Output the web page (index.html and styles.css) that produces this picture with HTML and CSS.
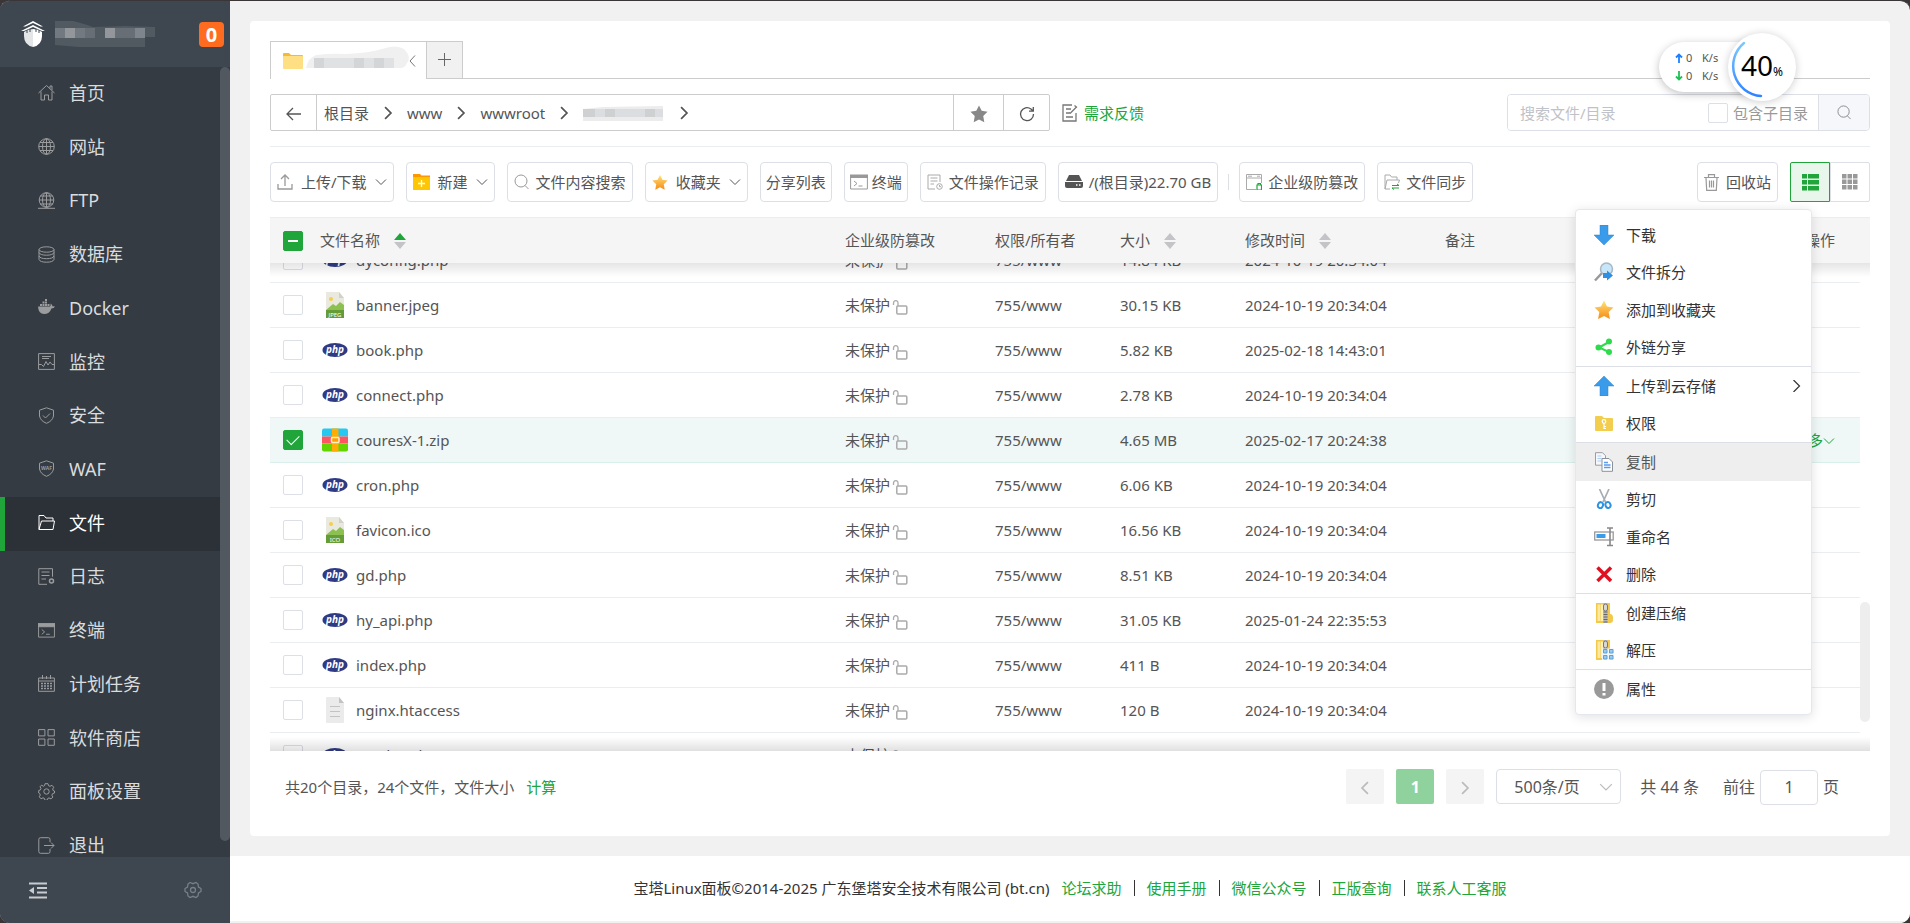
FILE: index.html
```html
<!DOCTYPE html>
<html lang="zh-CN">
<head>
    <meta charset="UTF-8">
    <meta name="viewport" content="width=device-width, initial-scale=1.0">
    <title>宝塔Linux面板</title>
    <link rel="stylesheet" href="styles.css">
</head>
<body>
    <!-- shared icons -->
    <svg class="sprite" aria-hidden="true">
        <symbol id="i-php" viewBox="0 0 26 16">
            <ellipse cx="13" cy="8" rx="12.500" ry="7" fill="#2f3a85"/>
            <text x="13" y="10.500" font-family="Open Sans, sans-serif" font-size="10" font-weight="700" font-style="italic" fill="#fff" text-anchor="middle">php</text>
        </symbol>
        <symbol id="i-pic" viewBox="0 0 20 26">
            <path d="M1 0h13l5 6v20H1z" fill="#e9e9df"/>
            <path d="M14 0v6h5z" fill="#d2d3c6"/>
            <circle cx="6" cy="7" r="2" fill="#f6ce4b"/>
            <path d="M1 18l7-6 3 2 4-4 4 3v6H1z" fill="#8cc152"/>
            <path d="M1 18h18v8H1z" fill="#659c35"/>
        </symbol>
        <symbol id="i-txt" viewBox="0 0 20 26">
            <path d="M1 1q0-1 1-1h12l5 6v19q0 1-1 1H2q-1 0-1-1z" fill="#ebebeb"/>
            <path d="M14 0v6h5z" fill="#c3c3c3"/>
            <path d="M5 9.500h10M5 14.500h10M5 19.500h10" stroke="#c3c3c3"/>
        </symbol>
        <symbol id="i-zip" viewBox="0 0 26 23">
            <path d="M0 2q0-2 2-2h22q2 0 2 2v6H0z" fill="#25c8f0"/>
            <path d="M0 8h26v7H0z" fill="#ff5562"/>
            <path d="M0 15h26v6q0 2-2 2H2q-2 0-2-2z" fill="#63d400"/>
            <path d="M10 0h6.500v23H10z" fill="#ffad05"/>
            <rect x="9.500" y="9" width="7.500" height="5" rx="1" fill="#ffa000" stroke="#fff3c4" stroke-width="1.500"/>
        </symbol>
        <symbol id="i-lock" viewBox="0 0 16 16">
            <path d="M1.500 6V4.200Q1.500 1.700 3.800 1.700T6 4.200V7" fill="none" stroke="#aaa" stroke-width="1.300"/>
            <rect x="4.800" y="7" width="10" height="8" rx="1" fill="none" stroke="#aaa" stroke-width="1.500"/>
        </symbol>
        <symbol id="i-down" viewBox="0 0 12 12"><path d="M1 3.500l5 5 5-5" fill="none" stroke="currentColor"/></symbol>
        <symbol id="i-right" viewBox="0 0 12 12"><path d="M3.500 1l5 5-5 5" fill="none" stroke="currentColor" stroke-width="1.500"/></symbol>
        <symbol id="i-sort" viewBox="0 0 12 18">
            <path class="up" d="M6 1l6 7H0z"/><path d="M6 17l6-7H0z" fill="#c4c4c8"/>
        </symbol>
        <symbol id="i-star" viewBox="0 0 20 20">
            <linearGradient id="gold" x2="0" y2="1"><stop offset="0" stop-color="#ffe27c"/><stop offset="1" stop-color="#f78b12"/></linearGradient>
            <path d="M10 .5l3 6 6.500 1-4.800 4.600 1.200 7L10 16l-5.900 3.100 1.200-7L.5 7.500l6.500-1z" fill="url(#gold)"/>
        </symbol>
        <symbol id="i-term" viewBox="0 0 18 16">
            <path d="M0 .5h18V4H0z" fill="currentColor"/>
            <path d="M.6 1v14h16.800V1M4 7l3 2.500L4 12M8.500 12h4" fill="none" stroke="currentColor"/>
        </symbol>
        <symbol id="i-search" viewBox="0 0 16 16"><circle cx="7" cy="7" r="6" fill="none" stroke="currentColor"/><path d="M11 11.500l3.500 3.500" stroke="currentColor"/></symbol>
        <symbol id="i-zipdir" viewBox="0 0 20 20">
            <path d="M2 0h14v11h1q2 1 2 3v3q0 3-3 3H2z" fill="#f3c94c"/>
            <path d="M3.500 1.500h3V18h-3z" fill="#fbe9a2"/><path d="M7 1.500h2V18H7z" fill="#fff0b8"/>
            <path d="M9.500 0h4v20h-4z" fill="#b8b8b8"/>
            <path d="M11.500 6v14" stroke="#666" stroke-width="4" stroke-dasharray="1 1.500"/>
            <rect x="9.500" y="1" width="4" height="7" rx="2" fill="#d8d8d8" stroke="#777"/>
        </symbol>
    </svg>

    <aside class="sidebar">
        <div class="logo">
            <svg width="24" height="26" viewBox="0 0 24 26">
                <path d="M12 0L2 5.500h2.500L12 2l7.500 3.500H22zM12 4L0 10h3l9-4 9 4h3z" fill="#fff"/>
                <path d="M3 11q4-3 9-3v18q-9-2-9-11z" fill="#e3e5e6"/><path d="M21 11q-4-3-9-3v18q9-2 9-11z" fill="#fff"/>
                <path d="M6 9v3M9 8v3M15 8v3M18 9v3" stroke="#3e464f"/>
            </svg>
            <!-- masked server name -->
            <svg class="mask" width="100" height="27" viewBox="0 0 100 27">
                <path d="M0 0h18q12 3 20 6l32-1 30 1v10H90v10H24L0 24z" fill="#515961"/>
                <path d="M0 7h10v10H0zM20 7h10v10H20z" fill="#737980"/><path d="M10 7h10v10H10zM50 7h10v10H50z" fill="#93979b"/>
                <path d="M30 7h10v10H30zM60 7h20v10H60z" fill="#676e76"/><path d="M80 7h10v10H80z" fill="#7f858c"/>
            </svg>
            <span class="count">0</span>
        </div>
        <nav class="nav">
            <ul>
                <li><a href="#"><svg viewBox="0 0 17 17"><path d="M.5 9L8.500 1.500l8 7.500M12 4.500V2h2v4M3 7.500v8.500h3.500v-5h4v5H14V7.500"/></svg>首页</a></li>
                <li><a href="#"><svg viewBox="0 0 17 17"><circle cx="8.500" cy="8.500" r="7.800"/><ellipse cx="8.500" cy="8.500" rx="4" ry="7.800"/><path d="M8.500.7v15.600M.7 8.500h15.600M2 4.500h13M2 12.500h13"/></svg>网站</a></li>
                <li><a href="#"><svg viewBox="0 0 17 17"><circle cx="8.500" cy="8" r="7.300"/><ellipse cx="8.500" cy="8" rx="4" ry="7.300"/><path d="M8.500.7v15M1.200 8h14.600M2.500 4h12M2 12h13M0 16.300h17"/></svg>FTP</a></li>
                <li><a href="#"><svg viewBox="0 0 17 17"><ellipse cx="8.500" cy="3.500" rx="7.500" ry="2.700"/><path d="M1 3.500v10q1 2.700 7.500 2.700T16 13.500v-10M1 6.500q1 2.700 7.500 2.700T16 6.500M1 10q1 2.700 7.500 2.700T16 10"/></svg>数据库</a></li>
                <li><a href="#"><svg viewBox="0 0 17 17"><path class="solid" d="M0 7.500h12q1-1 .5-3 2 1 2 2.700 1.500-.2 2.500.3-1 2-3.500 2-2 5.500-7.500 5.500Q.5 15 0 7.500zM2 5h2v2H2zM4.500 5h2v2h-2zM7 5h2v2H7zM9.500 5h2v2h-2zM4.500 2.500h2v2h-2zM7 2.500h2v2H7zM7 0h2v2H7z"/></svg>Docker</a></li>
                <li><a href="#"><svg viewBox="0 0 17 17"><path d="M.6.6h15.800v15.800H.6zM4 3.500h9M4 5.500h7M1 11.500h2.500l2 2 2.500-5 2 3.500 2-3 2 2.500H16"/></svg>监控</a></li>
                <li><a href="#"><svg viewBox="0 0 17 17"><path d="M8.500.8l7 2.400V9q-1 5-7 7.300Q2.500 14 1.500 9V3.200zM5 8.500l2.500 2.500 4.500-4.500"/></svg>安全</a></li>
                <li><a href="#"><svg viewBox="0 0 17 17"><path d="M8.500.8l7 2.400V9q-1 5-7 7.300Q2.500 14 1.500 9V3.200z"/><text x="8.500" y="10" text-anchor="middle" font-size="5" font-weight="700">WAF</text></svg>WAF</a></li>
                <li class="active"><a href="#"><svg viewBox="0 0 17 17"><path d="M1 15.500V1.500h5l2 2.500h7v3M1 15.500L3.500 7h13L15 15.500z"/></svg>文件</a></li>
                <li><a href="#"><svg viewBox="0 0 17 17"><path d="M9 16.300H.8V.7h13.700v8M3.500 4h8M3.500 7.500h8M3.500 11H8"/><circle cx="13.500" cy="13" r="2" stroke-width="1.500"/></svg>日志</a></li>
                <li><a href="#"><svg viewBox="0 0 18 16"><use href="#i-term"/></svg>终端</a></li>
                <li><a href="#"><svg viewBox="0 0 17 17"><path d="M.6 3h15.800v13.300H.6zM.6 6h15.800M4.500 0v4M8.500 1v3M12.500 0v4"/><path d="M3 8.500h11M3 11h11M3 13.500h11" stroke-width="1.500" stroke-dasharray="2 1"/></svg>计划任务</a></li>
                <li><a href="#"><svg viewBox="0 0 17 17"><path d="M.6.6h6.300v6.300H.6zM10 .6h6.300v6.300H10zM.6 10h6.300v6.300H.6zM10 10h6.300v6.300H10z"/></svg>软件商店</a></li>
                <li><a href="#"><svg viewBox="0 0 17 17"><path d="M7 .7h3l.5 2 1.500.6 2-1 1.700 2-1 1.700.4 1.500 1.400.5v2l-2 .7-.6 1.500 1 1.800-1.900 1.900-2-1-1.300.6-.7 1.800H7l-.7-2-1.300-.5-2 1-1.700-2 1-1.800-.6-1.500L.7 10V7.500l1.700-.6.6-1.500-1-1.600L3.500 2.200l2 1 1.100-.6z"/><circle cx="8.500" cy="8.500" r="2.700"/></svg>面板设置</a></li>
                <li><a href="#"><svg viewBox="0 0 17 17"><path d="M12 5V2.500Q12 .7 10.500.7h-8Q.8.700.8 2.500v12q0 1.800 1.700 1.800h8q1.500 0 1.500-1.800V12M6 8.500h10M13 5.500l3 3-3 3"/></svg>退出</a></li>
            </ul>
            <div class="nav-bar"></div>
        </nav>
        <div class="side-foot">
            <button type="button" aria-label="收起菜单"><svg width="18" height="17" viewBox="0 0 18 17"><path d="M0 1.500h18M8 6h10M8 10.500h10M0 15.500h18" stroke="#c8ccd0" stroke-width="2"/><path d="M5 5v7L0 8.500z" fill="#c8ccd0"/></svg></button>
            <button type="button" aria-label="设置"><svg width="18" height="18" viewBox="0 0 18 18"><path d="M6 1.500l3 1.200 3-1.200 2 1.500.5 3 2.500 1.500v3L14.500 12 14 15l-2 1.500-3-1.200-3 1.200L4 15l-.5-3L1 10.500v-3L3.500 6 4 3z" fill="none" stroke="#777f87" stroke-width="1.300"/><circle cx="9" cy="9" r="2.500" fill="none" stroke="#777f87" stroke-width="1.300"/></svg></button>
        </div>
    </aside>

    <main class="main">
        <section class="card">
            <div class="tabs">
                <div class="tab">
                    <svg width="20" height="16" viewBox="0 0 20 16"><path d="M0 1q0-1 1-1h5l2 2h11q1 0 1 1v3H0z" fill="#f5b936"/><rect y="3" width="20" height="13" rx="1" fill="#ffdf84"/></svg>
                    <svg class="mask" width="104" height="24" viewBox="0 0 104 24">
                        <path d="M0 22q2-10 10-13 16-2 30-1 24-1 36-5 14-5 22 0 8 8 3 14-2 5-6 5z" fill="#f0f0f0"/>
                        <path d="M8 12h10v10H8zM48 12h10v10H48zM68 12h10v10H68z" fill="#d3d5d6"/><path d="M18 12h30v10H18zM58 12h10v10H58zM78 12h10v10H78z" fill="#e0e1e3"/>
                    </svg>
                    <button type="button" aria-label="关闭"><svg width="8" height="12" viewBox="0 0 8 12"><path d="M7 .5L2 6l5 5.500" fill="none" stroke="#777"/></svg></button>
                </div>
                <button type="button" class="tab-add" aria-label="新标签"><svg width="13" height="13" viewBox="0 0 13 13"><path d="M6.500 0v13M0 6.500h13" stroke="#666"/></svg></button>
            </div>

            <div class="path-row">
                <div class="path">
                    <button type="button" class="back" aria-label="返回"><svg width="16" height="14" viewBox="0 0 16 14"><path d="M7 1L1 7l6 6M1 7h14" fill="none" stroke="#555" stroke-width="1.300"/></svg></button>
                    <div class="crumbs">
                        <a href="#">根目录</a><svg><use href="#i-right"/></svg>
                        <a href="#">www</a><svg><use href="#i-right"/></svg>
                        <a href="#">wwwroot</a><svg><use href="#i-right"/></svg>
                        <a href="#" aria-label="站点目录"><svg class="mask" width="82" height="17" viewBox="0 0 82 17"><path d="M0 5L20 3l60-1v15H0z" fill="#ececec"/><path d="M0 5h12v8H0zM22 5h10v8H22zM62 5h10v8H62z" fill="#cfd0d1"/><path d="M12 5h10v8H12zM32 5h30v8H32zM72 5h8v8h-8z" fill="#dcdde0"/></svg></a><svg><use href="#i-right"/></svg>
                    </div>
                    <button type="button" class="star" aria-label="收藏"><svg width="18" height="18" viewBox="0 0 20 20"><path d="M10 .5l3 6 6.500 1-4.800 4.600 1.200 7L10 16l-5.900 3.100 1.200-7L.5 7.500l6.500-1z" fill="#888"/></svg></button>
                    <button type="button" class="refresh" aria-label="刷新"><svg width="16" height="16" viewBox="0 0 16 16"><path d="M14.500 8A6.500 6.500 0 1 1 12 3l2 2M14.300 1v4.200H10" fill="none" stroke="#555" stroke-width="1.300"/></svg></button>
                </div>
                <a href="#" class="feedback"><svg width="16" height="18" viewBox="0 0 16 18"><path d="M10 1H1v16h13V9M4 5h5M4 9h4M4 13h7M8 9.500L14.500 3M12.500 1.500l2.500 2" fill="none" stroke="#777" stroke-width="1.300"/></svg>需求反馈</a>
                <form class="search">
                    <input type="text" placeholder="搜索文件/目录" aria-label="搜索文件/目录">
                    <label><input type="checkbox">包含子目录</label>
                    <button type="button" aria-label="搜索"><svg width="15" height="15"><use href="#i-search"/></svg></button>
                </form>
            </div>

            <div class="toolbar">
                <button type="button" class="drop"><svg width="16" height="16" viewBox="0 0 16 16"><path d="M1 10v5h14v-5M8 12V1.500M4 5l4-4 4 4" fill="none" stroke="#999" stroke-width="1.300"/></svg>上传/下载<svg class="caret"><use href="#i-down"/></svg></button>
                <button type="button" class="drop"><svg width="17" height="16" viewBox="0 0 17 16"><path d="M0 0h7l1.500 1.500H17V5H0z" fill="#ff9800"/><path d="M0 3h17v13H0z" fill="#ffc602"/><path d="M8.500 6v7M5 9.500h7" stroke="#fff" stroke-width="1.300"/></svg>新建<svg class="caret"><use href="#i-down"/></svg></button>
                <button type="button"><svg class="grey" width="16" height="16"><use href="#i-search"/></svg>文件内容搜索</button>
                <button type="button" class="drop"><svg width="16" height="17"><use href="#i-star"/></svg>收藏夹<svg class="caret"><use href="#i-down"/></svg></button>
                <button type="button" class="tight">分享列表</button>
                <button type="button" class="tight"><svg class="grey" width="18" height="16"><use href="#i-term"/></svg>终端</button>
                <button type="button"><svg width="16" height="16" viewBox="0 0 16 16"><path d="M8 15H1V1h12v7M3.500 4h7M3.500 7h7M3.500 10H7" fill="none" stroke="#aaa"/><circle cx="12.500" cy="12.500" r="2.800" fill="none" stroke="#aaa"/><path d="M12.500 11v1.700h1.500" fill="none" stroke="#aaa"/></svg>文件操作记录</button>
                <button type="button"><svg width="18" height="14" viewBox="0 0 18 14"><path d="M4 0h10l3 6H1z" fill="#555"/><path d="M0 7h18v4q0 2-2 2H2q-2 0-2-2z" fill="#555"/><path d="M11 10h1.500M14 10h1.500" stroke="#fff" stroke-width="1.500"/></svg>/(根目录)22.70 GB</button>
                <span class="split"></span>
                <button type="button"><svg width="16" height="16" viewBox="0 0 16 16"><path d="M10 15.500H.5V.5h15V9M.5 4h15M2 2.200h4M11 2.200h3" fill="none" stroke="#aaa"/><path d="M11 11h4.500v5H11zM12 11V9.500h2.500V11" fill="none" stroke="#20a53a" stroke-width="1.200"/></svg>企业级防篡改</button>
                <button type="button"><svg width="16" height="16" viewBox="0 0 16 16"><path d="M1 15V1h5l1.500 2H13v3M1 15L3 6h12.500l-1 3M1 15h5" fill="none" stroke="#aaa"/><path d="M8 11.500h7l-2-1.500M15 14H8l2 1.500" fill="none" stroke="#20a53a"/></svg>文件同步</button>
                <button type="button" class="recycle"><svg width="15" height="17" viewBox="0 0 15 17"><path d="M0 3.500h15M4.500 3V.7h6V3M2 4l.7 12.300h9.600L13 4M5.500 6.500v7M7.500 6.500v7M9.500 6.500v7" fill="none" stroke="#999" stroke-width="1.200"/></svg>回收站</button>
                <div class="views">
                    <button type="button" class="on" aria-label="列表视图"><svg width="17" height="17" viewBox="0 0 17 17"><path d="M0 0h5v4.500H0zM6 0h11v4.500H6zM0 6h5v4.500H0zM6 6h11v4.500H6zM0 12h5v4.500H0zM6 12h11v4.500H6z" fill="#20a53a"/></svg></button>
                    <button type="button" aria-label="图标视图"><svg width="16" height="16" viewBox="0 0 16 16"><path d="M0 0h4.500v4.500H0zM5.500 0H10v4.500H5.500zM11 0h4.500v4.500H11zM0 5.500h4.500V10H0zM5.500 5.500H10V10H5.500zM11 5.500h4.500V10H11zM0 11h4.500v4.500H0zM5.500 11H10v4.500H5.500zM11 11h4.500v4.500H11z" fill="#999"/></svg></button>
                </div>
            </div>

            <div class="list-head">
                <table class="files">
                    <colgroup><col class="c-check"><col><col class="c-guard"><col class="c-perm"><col class="c-size"><col class="c-time"><col class="c-note"><col class="c-ops"></colgroup>
                    <thead>
                        <tr>
                            <th><input type="checkbox" class="half" aria-label="全选"></th>
                            <th>文件名称<svg class="sort asc"><use href="#i-sort"/></svg></th>
                            <th>企业级防篡改</th>
                            <th>权限/所有者</th>
                            <th>大小<svg class="sort"><use href="#i-sort"/></svg></th>
                            <th>修改时间<svg class="sort"><use href="#i-sort"/></svg></th>
                            <th>备注</th>
                            <th class="ops">操作</th>
                        </tr>
                    </thead>
                </table>
            </div>
            <div class="list-body">
                <table class="files scrolled">
                    <colgroup><col class="c-check"><col><col class="c-guard"><col class="c-perm"><col class="c-size"><col class="c-time"><col class="c-note"><col class="c-ops"></colgroup>
                    <tbody>
                        <tr><td><input type="checkbox" aria-label="dyconfig.php"></td><td><div class="name"><svg><use href="#i-php"/></svg>dyconfig.php</div></td><td>未保护<svg class="lock"><use href="#i-lock"/></svg></td><td>755/www</td><td>14.84 KB</td><td>2024-10-19 20:34:04</td><td></td><td></td></tr>
                        <tr><td><input type="checkbox" aria-label="banner.jpeg"></td><td><div class="name"><svg viewBox="0 0 20 26"><use href="#i-pic"/><text x="10" y="24.500" text-anchor="middle">JPEG</text></svg>banner.jpeg</div></td><td>未保护<svg class="lock"><use href="#i-lock"/></svg></td><td>755/www</td><td>30.15 KB</td><td>2024-10-19 20:34:04</td><td></td><td></td></tr>
                        <tr><td><input type="checkbox" aria-label="book.php"></td><td><div class="name"><svg><use href="#i-php"/></svg>book.php</div></td><td>未保护<svg class="lock"><use href="#i-lock"/></svg></td><td>755/www</td><td>5.82 KB</td><td>2025-02-18 14:43:01</td><td></td><td></td></tr>
                        <tr><td><input type="checkbox" aria-label="connect.php"></td><td><div class="name"><svg><use href="#i-php"/></svg>connect.php</div></td><td>未保护<svg class="lock"><use href="#i-lock"/></svg></td><td>755/www</td><td>2.78 KB</td><td>2024-10-19 20:34:04</td><td></td><td></td></tr>
                        <tr class="selected"><td><input type="checkbox" aria-label="couresX-1.zip" checked></td><td><div class="name"><svg><use href="#i-zip"/></svg>couresX-1.zip</div></td><td>未保护<svg class="lock"><use href="#i-lock"/></svg></td><td>755/www</td><td>4.65 MB</td><td>2025-02-17 20:24:38</td><td></td><td class="ops"><a href="#">更多<svg class="caret"><use href="#i-down"/></svg></a></td></tr>
                        <tr><td><input type="checkbox" aria-label="cron.php"></td><td><div class="name"><svg><use href="#i-php"/></svg>cron.php</div></td><td>未保护<svg class="lock"><use href="#i-lock"/></svg></td><td>755/www</td><td>6.06 KB</td><td>2024-10-19 20:34:04</td><td></td><td></td></tr>
                        <tr><td><input type="checkbox" aria-label="favicon.ico"></td><td><div class="name"><svg viewBox="0 0 20 26"><use href="#i-pic"/><text x="10" y="24.500" text-anchor="middle">ICO</text></svg>favicon.ico</div></td><td>未保护<svg class="lock"><use href="#i-lock"/></svg></td><td>755/www</td><td>16.56 KB</td><td>2024-10-19 20:34:04</td><td></td><td></td></tr>
                        <tr><td><input type="checkbox" aria-label="gd.php"></td><td><div class="name"><svg><use href="#i-php"/></svg>gd.php</div></td><td>未保护<svg class="lock"><use href="#i-lock"/></svg></td><td>755/www</td><td>8.51 KB</td><td>2024-10-19 20:34:04</td><td></td><td></td></tr>
                        <tr><td><input type="checkbox" aria-label="hy_api.php"></td><td><div class="name"><svg><use href="#i-php"/></svg>hy_api.php</div></td><td>未保护<svg class="lock"><use href="#i-lock"/></svg></td><td>755/www</td><td>31.05 KB</td><td>2025-01-24 22:35:53</td><td></td><td></td></tr>
                        <tr><td><input type="checkbox" aria-label="index.php"></td><td><div class="name"><svg><use href="#i-php"/></svg>index.php</div></td><td>未保护<svg class="lock"><use href="#i-lock"/></svg></td><td>755/www</td><td>411 B</td><td>2024-10-19 20:34:04</td><td></td><td></td></tr>
                        <tr><td><input type="checkbox" aria-label="nginx.htaccess"></td><td><div class="name"><svg><use href="#i-txt"/></svg>nginx.htaccess</div></td><td>未保护<svg class="lock"><use href="#i-lock"/></svg></td><td>755/www</td><td>120 B</td><td>2024-10-19 20:34:04</td><td></td><td></td></tr>
                        <tr><td><input type="checkbox" aria-label="qrcba.php"></td><td><div class="name"><svg><use href="#i-php"/></svg>sendxs.php</div></td><td>未保护<svg class="lock"><use href="#i-lock"/></svg></td><td>755/www</td><td>2.61 KB</td><td>2024-10-19 20:34:04</td><td></td><td></td></tr>
                    </tbody>
                </table>
                <div class="list-bar"></div>
            </div>

            <div class="pager">
                <p>共20个目录，24个文件，文件大小 <a href="#">计算</a></p>
                <div class="pages">
                    <button type="button" aria-label="上一页"><svg class="flip"><use href="#i-right"/></svg></button>
                    <button type="button" class="current">1</button>
                    <button type="button" aria-label="下一页"><svg><use href="#i-right"/></svg></button>
                    <span class="size-box"><select aria-label="每页条数"><option>500条/页</option></select><svg><use href="#i-down"/></svg></span>
                    <span class="total">共 44 条</span>
                    <label>前往<input type="text" value="1">页</label>
                </div>
            </div>
        </section>

        <footer class="footer">
            <span>宝塔Linux面板©2014-2025 广东堡塔安全技术有限公司 (bt.cn)</span>
            <a href="#">论坛求助</a><i></i><a href="#">使用手册</a><i></i><a href="#">微信公众号</a><i></i><a href="#">正版查询</a><i></i><a href="#">联系人工客服</a>
        </footer>
    </main>

    <!-- network / memory ball -->
    <div class="ball">
        <div class="speed">
            <span><svg width="8" height="10" viewBox="0 0 8 10"><path d="M4 10V2M1 4.500l3-3 3 3" fill="none" stroke="#1e80ff" stroke-width="1.800"/></svg><b>0</b>K/s</span>
            <span><svg width="8" height="10" viewBox="0 0 8 10"><path d="M4 0v8M1 5.500l3 3 3-3" fill="none" stroke="#1fc155" stroke-width="1.800"/></svg><b>0</b>K/s</span>
        </div>
        <div class="percent">
            <svg width="68" height="68" viewBox="0 0 68 68">
                <linearGradient id="arc" x2="0" y2="1"><stop offset="0" stop-color="#7cc8ff"/><stop offset="1" stop-color="#2f83ff"/></linearGradient>
                <path d="M16 10A30 30 0 0 0 33 63" fill="none" stroke="url(#arc)" stroke-width="2.500" stroke-linecap="round"/>
            </svg>
            <span>40<small>%</small></span>
        </div>
    </div>

    <!-- right-click menu -->
    <div class="context">
        <div class="group four">
            <button type="button"><svg viewBox="0 0 20 20"><path d="M6 0h8v10h6L10 20 0 10h6z" fill="#3a9bea" stroke="#2b87d0" stroke-width=".5"/></svg>下载</button>
            <button type="button"><svg viewBox="0 0 20 20"><path d="M1 18.500L8 11" stroke="#999" stroke-width="2.500"/><circle cx="12.500" cy="7" r="6" fill="#c8e6fa" stroke="#a9b7c0" stroke-width="1.500"/><path d="M9 11h4V8.500l6 5-6 5V16H9z" fill="#2f8fe0"/></svg>文件拆分</button>
            <button type="button"><svg><use href="#i-star"/></svg>添加到收藏夹</button>
            <button type="button"><svg viewBox="0 0 20 20"><path d="M15 5L5 10.500l10 4.500" fill="none" stroke="#2edb4c" stroke-width="2"/><circle cx="15" cy="4.500" r="3" fill="#2edb4c"/><circle cx="4.500" cy="10.500" r="3" fill="#2edb4c"/><circle cx="15" cy="15" r="3" fill="#2edb4c"/></svg>外链分享</button>
        </div>
        <div class="group two">
            <button type="button"><svg viewBox="0 0 20 20"><path d="M6 20h8V10h6L10 0 0 10h6z" fill="#3a9bea" stroke="#2b87d0" stroke-width=".5"/></svg>上传到云存储<svg class="more" viewBox="0 0 12 12"><path d="M3.500 0l6 6-6 6" fill="none" stroke="#333" stroke-width="1.200"/></svg></button>
            <button type="button"><svg viewBox="0 0 20 20"><path d="M1 4q0-1 1-1h6l2 2h8q1 0 1 1v11q0 1-1 1H2q-1 0-1-1z" fill="#f2cd4e"/><path d="M10 10v6M10 13.500h2M10 15.500h2" stroke="#fff" stroke-width="1.200"/><circle cx="10" cy="8.500" r="1.800" fill="none" stroke="#fff" stroke-width="1.200"/></svg>权限</button>
        </div>
        <div class="group four">
            <button type="button" class="hover"><svg viewBox="0 0 20 20"><path d="M1.500.7h7l3 3v9.500h-10z" fill="#f6f8fb" stroke="#989ca3"/><path d="M3.500 4h4M3.500 6.500h4M3.500 9h4" stroke="#a9cdf5"/><path d="M8 6.500h7l3.500 3.500v9.300H8z" fill="#fff" stroke="#8b9199"/><path d="M10 10.500h4M10 13h6.500M10 15.500h6.500" stroke="#5b9bf0" stroke-width="1.300"/></svg>复制</button>
            <button type="button"><svg viewBox="0 0 20 20"><path d="M5.500 0l6 13M15 0L9 13" stroke="#a7adb3" stroke-width="1.700"/><ellipse cx="6.500" cy="16" rx="2.500" ry="3" fill="none" stroke="#2d93e0" stroke-width="2" transform="rotate(20 6 16)"/><ellipse cx="14" cy="16" rx="2.500" ry="3" fill="none" stroke="#2d93e0" stroke-width="2" transform="rotate(-20 14 16)"/></svg>剪切</button>
            <button type="button"><svg viewBox="0 0 20 20"><rect x=".7" y="5" width="18.500" height="8" fill="#fff" stroke="#999" stroke-width="1.300"/><path d="M2.500 7h9v4h-9z" fill="#3a9bea"/><path d="M13 1h6M16 1v17.500M13 18.500h6" stroke="#888" stroke-width="1.600"/></svg>重命名</button>
            <button type="button"><svg viewBox="0 0 20 20"><path d="M3.500 3.500L17 17M17 3.500L3.500 17" stroke="#e01020" stroke-width="3.500"/></svg>删除</button>
        </div>
        <div class="group two">
            <button type="button"><svg><use href="#i-zipdir"/></svg>创建压缩</button>
            <button type="button"><svg viewBox="0 0 20 20"><use href="#i-zipdir"/><path d="M8 8.500h12V20H8z" fill="#eef5fb"/><path d="M9.500 9.500h3.500V13H9.500zM15.500 9.500H19V13h-3.500zM9.500 15.500h3.500V19H9.500zM15.500 15.500H19V19h-3.500z" fill="#9cc9ec" stroke="#5ba2d8"/></svg>解压</button>
        </div>
        <div class="group">
            <button type="button"><svg viewBox="0 0 20 20"><circle cx="10" cy="10" r="10" fill="#999"/><path d="M10 4v8M10 14v2.500" stroke="#fff" stroke-width="3"/></svg>属性</button>
        </div>
    </div>
</body>
</html>
```
FILE: styles.css
```css
* {
    box-sizing: border-box;
}
html {
    background: #3a3637;
}
body {
    margin: 0;
    height: 100vh;
    display: flex;
    overflow: hidden;
    position: relative;
    background: #f1f1f1;
    border-top: 1px solid #3a3637;
    border-radius: 10px;
    color: #555;
    font-family: "Noto Sans", "Noto Sans CJK SC", sans-serif;
    font-size: 15px;
    line-height: 20px;
}
button, input, select {
    font: inherit;
    color: inherit;
    margin: 0;
}
button {
    cursor: pointer;
    padding: 0;
    border: none;
    background: none;
}
a {
    color: #20a53a;
    text-decoration: none;
}
svg {
    flex: none;
}
.sprite {
    position: absolute;
    width: 0;
    height: 0;
}
input[type="checkbox"] {
    appearance: none;
    display: grid;
    place-items: center;
    flex: none;
    width: 20px;
    height: 20px;
    border: 1px solid #dcdfe6;
    border-radius: 2px;
    background: #fff;
}
input[type="checkbox"]:checked,
input.half {
    background: #20a53a;
    border-color: #20a53a;
}
input[type="checkbox"]:checked::after {
    content: "";
    width: 11px;
    height: 6px;
    border: solid #fff;
    border-width: 0 0 1px 1px;
    transform: translateY(-2px) rotate(-45deg);
}
input.half::after {
    content: "";
    width: 10px;
    height: 2px;
    background: #fff;
}

/* sidebar */
.sidebar {
    flex: none;
    width: 230px;
    display: flex;
    flex-direction: column;
    background: #353b42;
}
.logo {
    display: flex;
    align-items: center;
    gap: 10px;
    flex: none;
    height: 66px;
    padding: 0 6px 0 21px;
    background: #3e464f;
}
.count {
    width: 25px;
    margin-left: auto;
    border-radius: 4px;
    background: #ff6c20;
    color: #fff;
    font-size: 20px;
    font-weight: 700;
    line-height: 25px;
    text-align: center;
}
.nav {
    flex: 1;
    min-height: 0;
    display: flex;
    overflow: hidden;
}
.nav ul {
    flex: 1;
    display: grid;
    grid-auto-rows: 1fr;
    height: calc(100% + 16px);
    margin: 0;
    padding: 0;
    list-style: none;
}
.nav a {
    display: flex;
    align-items: center;
    gap: 14px;
    height: 100%;
    padding: 0 0 2px 33px;
    border-left: 5px solid transparent;
    color: #dadcde;
    font-size: 18px;
}
.nav svg {
    width: 17px;
    height: 17px;
    color: #9a9c9e;
    fill: none;
    stroke: #9a9c9e;
}
.nav .solid,
.nav text {
    fill: #9a9c9e;
    stroke: none;
}
.nav .active a {
    background: #2c3037;
    border-color: #20a53a;
    color: #fff;
}
.nav .active svg {
    stroke: #fff;
}
.nav-bar {
    width: 10px;
    height: calc(100% - 16px);
    border-radius: 5px;
    background: #52585f;
}
.side-foot {
    display: flex;
    align-items: center;
    justify-content: space-between;
    flex: none;
    height: 66px;
    padding: 0 28px 0 29px;
    background: #3e464f;
}
.side-foot svg {
    display: block;
}

/* content */
.main {
    flex: 1;
    min-width: 0;
    display: flex;
    flex-direction: column;
}
.card {
    flex: 1;
    min-height: 0;
    display: flex;
    flex-direction: column;
    margin: 20px;
    padding: 20px 20px 0;
    border-radius: 4px;
    background: #fff;
}
.tabs {
    display: flex;
    height: 38px;
    background: linear-gradient(#ccc, #ccc) bottom / 100% 1px no-repeat;
}
.tab {
    display: flex;
    align-items: center;
    gap: 3px;
    width: 156px;
    padding-left: 12px;
    border: 1px solid #ccc;
    border-width: 1px 0 0 1px;
    background: #fff;
}
.tab .mask {
    margin-bottom: 6px;
}
.tab button {
    margin-left: -5px;
}
.tab button svg {
    display: block;
}
.tab-add {
    width: 37px;
    border: 1px solid #ccc;
    background: #f1f1f1;
}
.path-row {
    display: flex;
    align-items: center;
    padding: 15px 0;
    border-bottom: 1px solid #ebeef0;
}
.path {
    display: flex;
    width: 780px;
    height: 37px;
    border: 1px solid #ccc;
    border-radius: 2px;
}
.back {
    width: 46px;
    border-right: 1px solid #ccc;
}
.crumbs {
    flex: 1;
    display: flex;
    align-items: center;
    gap: 12px;
    padding-left: 7px;
}
.crumbs a {
    color: #555;
}
.crumbs svg {
    width: 14px;
    height: 14px;
}
.crumbs .mask {
    display: block;
    width: 82px;
    height: 17px;
}
.star {
    width: 50px;
    border-left: 1px solid #ccc;
}
.refresh {
    width: 46px;
    border-left: 1px solid #ccc;
}
.path button svg {
    vertical-align: middle;
}
.feedback {
    display: flex;
    align-items: center;
    gap: 6px;
    margin-left: 12px;
}
.search {
    display: flex;
    width: 363px;
    height: 37px;
    margin-left: auto;
    border: 1px solid #dcdfe6;
    border-radius: 4px;
    overflow: hidden;
}
.search input[type="text"] {
    flex: 1;
    min-width: 0;
    padding: 0 12px;
    border: none;
    outline: none;
}
.search ::placeholder {
    color: #bfc2c8;
}
.search label {
    display: flex;
    align-items: center;
    gap: 5px;
    padding-right: 10px;
    color: #999;
}
.search button {
    width: 51px;
    border-left: 1px solid #dcdfe6;
    background: #f5f7fa;
    color: #888;
}
.search button svg {
    display: block;
    margin: 0 auto;
}

/* toolbar */
.toolbar {
    display: flex;
    gap: 12px;
    padding: 15px 0;
}
.toolbar > button {
    display: flex;
    align-items: center;
    gap: 6px;
    height: 40px;
    padding: 0 6px;
    border: 1px solid #dcdfe6;
    border-radius: 4px;
    white-space: nowrap;
}
.toolbar > .drop {
    gap: 8px;
}
.toolbar > .tight {
    gap: 4px;
    padding: 0 5px;
}
.caret {
    width: 12px;
    height: 12px;
}
.grey {
    color: #999;
}
.split {
    align-self: center;
    width: 1px;
    height: 16px;
    margin: 0 -2px;
    background: #dcdfe6;
}
.toolbar > .recycle {
    margin-left: auto;
    gap: 7px;
}
.views {
    display: flex;
}
.views button {
    display: grid;
    place-items: center;
    width: 40px;
    height: 40px;
    border: 1px solid #dcdfe6;
    border-radius: 0 2px 2px 0;
}
.views .on {
    border-color: #20a53a;
    border-radius: 2px 0 0 2px;
    background: #e9f6eb;
}

/* file list */
.files {
    width: 100%;
    table-layout: fixed;
    border-collapse: separate;
    border-spacing: 0;
}
.files th,
.files td {
    height: 45px;
    padding: 0 10px;
    text-align: left;
    font-weight: 400;
    white-space: nowrap;
}
.files th {
    padding-bottom: 1px;
}
.files th:first-child,
.files td:first-child {
    padding: 0 0 0 13px;
}
.files td {
    border-bottom: 1px solid #ebeef0;
}
.files .ops {
    padding-right: 25px;
    text-align: right;
}
.c-check { width: 40px; }
.c-guard { width: 150px; }
.c-perm, .c-size { width: 125px; }
.c-time, .c-ops { width: 200px; }
.c-note { width: 225px; }
.list-head {
    flex: none;
    padding-right: 10px;
    border-top: 1px solid #ebeef0;
    background: #f5f5f5;
}
.sort {
    width: 12px;
    height: 18px;
    margin-left: 14px;
    vertical-align: middle;
    fill: #c4c4c8;
}
.asc {
    fill: #20a53a;
}
.list-body {
    flex: 1;
    min-height: 0;
    position: relative;
    padding-right: 10px;
    overflow: hidden;
}
.list-body::before,
.list-body::after {
    content: "";
    position: absolute;
    left: 0;
    right: 0;
    height: 14px;
}
.list-body::before {
    top: 0;
    background: linear-gradient(rgba(0, 0, 0, .1), transparent);
}
.list-body::after {
    bottom: 0;
    background: linear-gradient(transparent, rgba(0, 0, 0, .12));
}
/* list is scrolled partway through its first row */
.scrolled {
    margin-top: -25px;
}
.list-bar {
    position: absolute;
    right: 0;
    bottom: 29px;
    width: 10px;
    height: 120px;
    border-radius: 5px;
    background: #eee;
}
.selected td {
    background: #eff8f7;
    border-color: #d9efea;
}
.name {
    display: flex;
    align-items: center;
    gap: 8px;
    padding-left: 2px;
}
.name svg {
    width: 26px;
    height: 26px;
}
.name text {
    fill: #fff;
    font-size: 6px;
}
.lock {
    width: 16px;
    height: 16px;
    margin-left: 2px;
    vertical-align: -4px;
}
.ops .caret {
    vertical-align: -1px;
}

/* pager */
.pager {
    display: flex;
    justify-content: space-between;
    flex: none;
    height: 85px;
    padding: 18px 31px 0 15px;
}
.pager p {
    margin: 8px 0 0;
}
.pager p a {
    margin-left: 8px;
}
.pages {
    display: flex;
    gap: 12px;
    height: 36px;
    font-size: 16px;
}
.pages button {
    width: 38px;
    height: 35px;
    border-radius: 2px;
    background: #f4f4f5;
    color: #bbb;
}
.pages svg {
    width: 14px;
    height: 14px;
    vertical-align: middle;
}
.flip {
    transform: scaleX(-1);
}
.pages .current {
    background: #90d29d;
    color: #fff;
    font-weight: 700;
}
.size-box {
    position: relative;
}
.size-box svg {
    position: absolute;
    right: 8px;
    top: 11px;
    color: #bbb;
}
.size-box select {
    appearance: none;
    width: 125px;
    height: 35px;
    padding: 0 17px;
    border: 1px solid #dcdfe6;
    border-radius: 4px;
    background: #fff;
}
.total {
    margin: 8px 12px 0 7px;
}
.pages label {
    display: flex;
    align-items: center;
    gap: 5px;
}
.pages input {
    width: 58px;
    height: 35px;
    border: 1px solid #dcdfe6;
    border-radius: 4px;
    text-align: center;
}
.footer {
    display: flex;
    align-items: center;
    justify-content: center;
    gap: 12px;
    flex: none;
    height: 67px;
    padding-bottom: 1px;
    border-bottom: 2px solid #f1f1f1;
    background: #fff;
    color: #333;
}
.footer i {
    width: 1px;
    height: 16px;
    background: #333;
}

/* floating ball */
.ball {
    position: absolute;
    top: 32px;
    right: 114px;
    display: flex;
    align-items: center;
}
.speed {
    width: 90px;
    height: 50px;
    margin-right: -21px;
    padding: 7px 0 0 16px;
    border-radius: 25px 0 0 25px;
    background: #fff;
    box-shadow: 0 2px 8px rgba(0, 0, 0, .25);
    font-size: 11px;
    line-height: 18px;
}
.speed span {
    display: flex;
    align-items: center;
    gap: 3px;
}
.speed b {
    width: 13px;
    font-weight: 400;
}
.percent {
    display: grid;
    place-items: center;
    border-radius: 50%;
    background: #fff;
    box-shadow: 0 1px 8px rgba(0, 0, 0, .2);
    color: #000;
    font-size: 28px;
}
.percent svg,
.percent span {
    grid-area: 1 / 1;
}
.percent span {
    padding-top: 3px;
}
.percent small {
    font-size: 12px;
}

/* context menu */
.context {
    position: absolute;
    top: 208px;
    right: 98px;
    width: 237px;
    padding: 6px 0;
    border: 1px solid #e4e7ed;
    border-radius: 4px;
    background: #fff;
    box-shadow: 0 2px 12px rgba(0, 0, 0, .12);
    color: #333;
}
.group {
    display: grid;
    grid-auto-rows: 1fr;
    height: 38px;
}
.two {
    height: 76px;
    border-bottom: 1px solid #dcdfe6;
}
.four {
    height: 151px;
    border-bottom: 1px solid #dcdfe6;
}
.context button {
    display: flex;
    align-items: center;
    gap: 12px;
    padding: 0 9px 0 18px;
}
.context button svg {
    width: 20px;
    height: 20px;
}
.context .hover {
    background: #eee;
    color: #555;
}
.context button .more {
    width: 12px;
    height: 12px;
    margin-left: auto;
}
```
